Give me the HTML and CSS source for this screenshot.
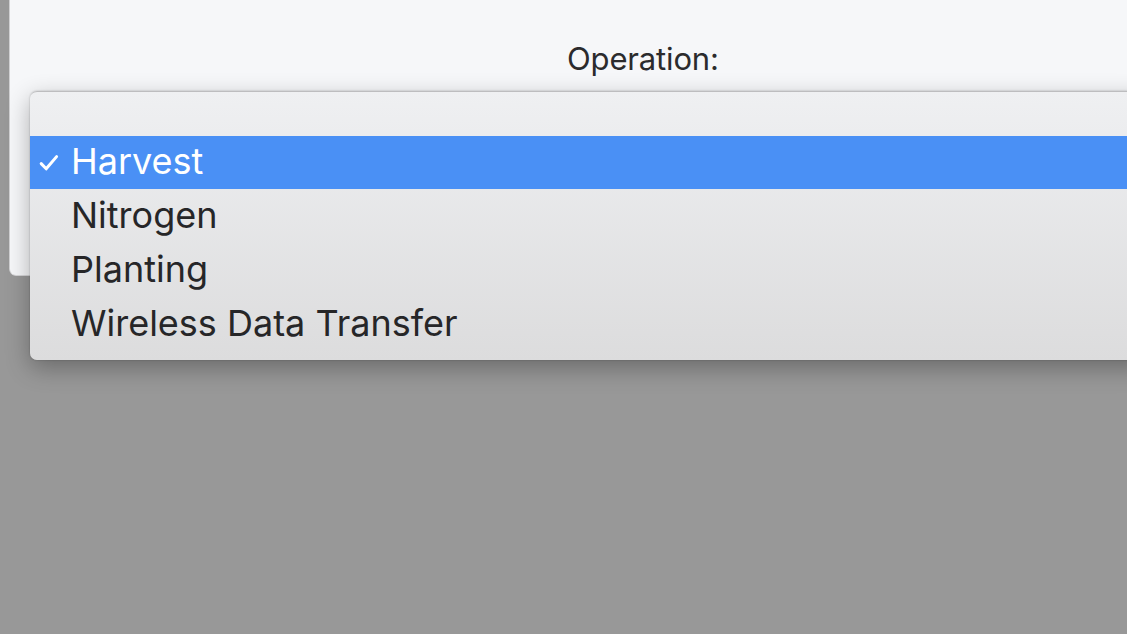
FILE: index.html
```html
<!DOCTYPE html>
<html>
<head>
<meta charset="utf-8">
<link rel="stylesheet" href="styles.css">
</head>
<body>
<div class="screen">
  <div class="panel">
    <div class="label">Operation:</div>
  </div>
  <div class="menu">
    <div class="item empty"></div>
    <div class="item selected">
      <span class="check"><svg width="20" height="18" viewBox="0 0 20 18"><path d="M2.2 9.6 L7.2 14.8 L17.6 2.6" fill="none" stroke="#fff" stroke-width="3" stroke-linecap="round" stroke-linejoin="round"/></svg></span>
      <span class="text">Harvest</span>
    </div>
    <div class="item"><span class="check"></span><span class="text">Nitrogen</span></div>
    <div class="item"><span class="check"></span><span class="text">Planting</span></div>
    <div class="item"><span class="check"></span><span class="text">Wireless Data Transfer</span></div>
  </div>
</div>
</body>
</html>
```

FILE: styles.css
```css
html, body {
  margin: 0;
  padding: 0;
}
body {
  width: 1127px;
  height: 634px;
  overflow: hidden;
  background: #989898;
  font-family: "Inter", "Liberation Sans", sans-serif;
}
.screen {
  position: relative;
  width: 1127px;
  height: 634px;
}
.panel {
  margin-left: 10px;
  height: 275px;
  background: #f6f7f9;
  border-bottom-left-radius: 6px;
  box-shadow: 0 1px 0 #d6d6d8, -1px 0 0 #d0d0d2;
  display: flex;
  flex-direction: column;
  align-items: flex-start;
}
.label {
  margin-top: 38px;
  margin-left: 557px;
  font-size: 31px;
  line-height: 42px;
  color: #2b2b2d;
  letter-spacing: -0.15px;
}
.menu {
  position: absolute;
  left: 30px;
  top: 91px;
  right: -20px;
  height: 269px;
  box-sizing: border-box;
  border-radius: 7px;
  border-top: 1px solid #bdbdbf;
  background: linear-gradient(#eff0f2, #dcdcdd);
  box-shadow: 0 8px 24px rgba(0,0,0,0.3), 0 0 2px rgba(0,0,0,0.25);
  display: flex;
  flex-direction: column;
}
.item {
  height: 54px;
  display: flex;
  align-items: center;
  color: #262628;
  font-size: 36px;
  letter-spacing: 0;
}
.item.empty {
  height: 44px;
}
.item.selected {
  height: 53px;
  background: #4a90f5;
  color: #ffffff;
}
.check {
  width: 41px;
  flex: none;
  display: flex;
  align-items: center;
  padding-left: 9px;
  box-sizing: border-box;
}
.check svg {
  display: block;
}
.text {
  line-height: 1;
  padding-bottom: 3px;
}
```
